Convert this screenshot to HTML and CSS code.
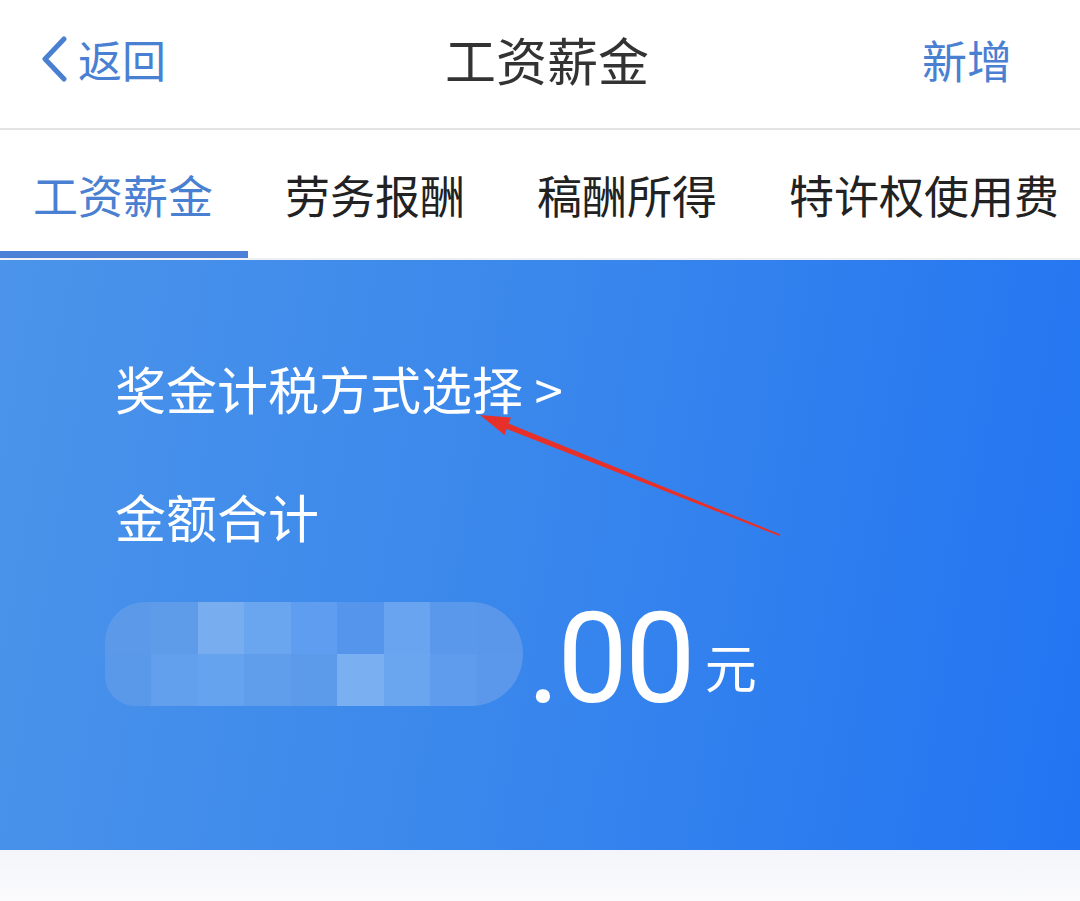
FILE: index.html
```html
<!DOCTYPE html>
<html lang="zh-CN">
<head>
    <meta charset="UTF-8">
    <meta name="viewport" content="width=device-width, initial-scale=1.0">
    <title>工资薪金</title>
    <link rel="stylesheet" href="styles.css">
</head>
<body>
    <!-- Nav bar -->
    <header class="navbar">
        <a class="nav-back">
            <svg class="back-icon" width="28" height="46" viewBox="0 0 28 46">
                <path d="M24 3 L5 23 L24 43" fill="none" stroke="#4a80d2" stroke-width="5" stroke-linecap="round" stroke-linejoin="round"/>
            </svg>
            <span>返回</span>
        </a>
        <h1 class="nav-title">工资薪金</h1>
        <a class="nav-action">新增</a>
    </header>

    <!-- Income type tabs -->
    <nav class="tabs">
        <div class="tab active">工资薪金</div>
        <div class="tab">劳务报酬</div>
        <div class="tab">稿酬所得</div>
        <div class="tab">特许权使用费</div>
    </nav>

    <!-- Summary card -->
    <section class="summary">
        <div class="bonus-link">奖金计税方式选择 &gt;</div>
        <div class="total-label">金额合计</div>
        <div class="amount-row">
            <div class="mosaic">
                <span style="background:#5c9ae9"></span><span style="background:#5e9cea"></span><span style="background:#78aef0"></span><span style="background:#6aa5ef"></span><span style="background:#5f9df0"></span><span style="background:#5595ec"></span><span style="background:#68a4f0"></span><span style="background:#5a98ec"></span><span style="background:#5a97eb"></span>
                <span style="background:#5a98ea"></span><span style="background:#62a0ed"></span><span style="background:#66a3ee"></span><span style="background:#609eec"></span><span style="background:#5c9aea"></span><span style="background:#7aaff2"></span><span style="background:#6aa5ef"></span><span style="background:#5f9ced"></span><span style="background:#5b98eb"></span>
            </div>
            <span class="amount">.00</span>
            <span class="unit">元</span>
        </div>

        <svg class="annotation" width="1080" height="590" viewBox="0 0 1080 590">
            <polygon points="480,155 511,157.5 508.5,163.5 780.5,274.5 779.5,276 506.5,169 504.5,175" fill="#e8302a"/>
        </svg>
    </section>

    <div class="footer-space"></div>
</body>
</html>
```

FILE: styles.css
```css
body {
    margin: 0;
    background: #ffffff;
    font-family: "Noto Sans CJK SC", "Noto Sans", sans-serif;
    width: 1080px;
    overflow: hidden;
}
.navbar {
    height: 130px;
    box-sizing: border-box;
    display: flex;
    align-items: center;
    justify-content: space-between;
    padding: 0 68px 10px 40px;
    border-bottom: 2px solid #e4e4e4;
    position: relative;
}
.nav-back {
    display: flex;
    align-items: center;
    gap: 10px;
    color: #4a80d2;
    font-size: 44px;
}
.nav-title {
    position: absolute;
    left: 14px;
    right: 0;
    top: 0;
    bottom: 10px;
    display: flex;
    align-items: center;
    justify-content: center;
    margin: 0;
    font-size: 51px;
    font-weight: 400;
    color: #333333;
    pointer-events: none;
}
.nav-action {
    color: #4a80d2;
    font-size: 45px;
}
.tabs {
    height: 128px;
    display: flex;
    border-bottom: 2px solid #eef0f4;
    overflow: hidden;
}
.tab {
    flex-shrink: 0;
    white-space: nowrap;
    padding: 0 36px 0 36px;
    display: flex;
    align-items: center;
    font-size: 45px;
    color: #222222;
    position: relative;
}
.tab:first-child {
    padding-left: 33px;
}
.tab.active {
    color: #4a80d2;
}
.tab.active::after {
    content: "";
    position: absolute;
    left: 0;
    right: 1px;
    bottom: 0;
    height: 7px;
    background: #4a80d8;
}
.summary {
    position: relative;
    height: 590px;
    box-sizing: border-box;
    padding: 98px 0 0 115px;
    background: linear-gradient(100deg, #4b94ea 0%, #3b88ec 45%, #2274f2 100%);
    color: #ffffff;
}
.bonus-link {
    font-size: 51px;
    line-height: 60px;
}
.total-label {
    font-size: 51px;
    line-height: 60px;
    margin-top: 68px;
}
.amount-row {
    display: flex;
    align-items: flex-end;
    margin-top: 49px;
    margin-left: -10px;
}
.mosaic {
    width: 418px;
    height: 104px;
    display: grid;
    grid-template-columns: repeat(9, 1fr);
    grid-template-rows: repeat(2, 1fr);
    border-radius: 40px 52px 52px 30px;
    overflow: hidden;
    margin-bottom: 17px;
}
.amount {
    font-family: Roboto, "Noto Sans", sans-serif;
    font-size: 126px;
    line-height: 128px;
    letter-spacing: -3px;
    margin-left: 4px;
}
.unit {
    font-size: 52px;
    line-height: 52px;
    margin-left: 12px;
    margin-bottom: 31px;
}
.annotation {
    position: absolute;
    left: 0;
    top: 0;
    pointer-events: none;
}
.footer-space {
    height: 51px;
    background: linear-gradient(#f3f5fa, #fbfbfd);
}
```
